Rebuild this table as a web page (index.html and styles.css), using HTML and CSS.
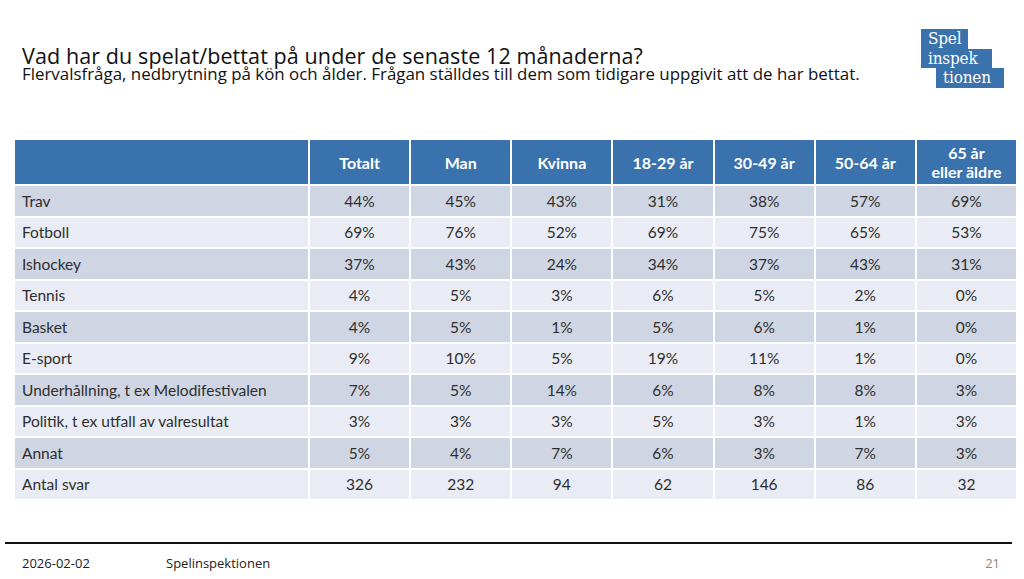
FILE: index.html
```html
<!DOCTYPE html>
<html lang="sv">
<head>
<meta charset="utf-8">
<link rel="stylesheet" href="styles.css">
</head>
<body>
<div class="slide">
  <header class="top">
    <div class="titles">
      <h1 class="title">Vad har du spelat/bettat på under de senaste 12 månaderna?</h1>
      <p class="subtitle">Flervalsfråga, nedbrytning på kön och ålder. Frågan ställdes till dem som tidigare uppgivit att de har bettat.</p>
    </div>
    <div class="logo">
      <span class="lg lg1">Spel</span>
      <span class="lg lg2">inspek</span>
      <span class="lg lg3">tionen</span>
    </div>
  </header>

  <div class="table">
    <div class="th first"></div>
    <div class="th">Totalt</div>
    <div class="th">Man</div>
    <div class="th">Kvinna</div>
    <div class="th">18-29 år</div>
    <div class="th">30-49 år</div>
    <div class="th">50-64 år</div>
    <div class="th">65 år<br>eller äldre</div>

    <div class="td lbl odd">Trav</div><div class="td odd">44%</div><div class="td odd">45%</div><div class="td odd">43%</div><div class="td odd">31%</div><div class="td odd">38%</div><div class="td odd">57%</div><div class="td odd">69%</div>
    <div class="td lbl">Fotboll</div><div class="td">69%</div><div class="td">76%</div><div class="td">52%</div><div class="td">69%</div><div class="td">75%</div><div class="td">65%</div><div class="td">53%</div>
    <div class="td lbl odd">Ishockey</div><div class="td odd">37%</div><div class="td odd">43%</div><div class="td odd">24%</div><div class="td odd">34%</div><div class="td odd">37%</div><div class="td odd">43%</div><div class="td odd">31%</div>
    <div class="td lbl">Tennis</div><div class="td">4%</div><div class="td">5%</div><div class="td">3%</div><div class="td">6%</div><div class="td">5%</div><div class="td">2%</div><div class="td">0%</div>
    <div class="td lbl odd">Basket</div><div class="td odd">4%</div><div class="td odd">5%</div><div class="td odd">1%</div><div class="td odd">5%</div><div class="td odd">6%</div><div class="td odd">1%</div><div class="td odd">0%</div>
    <div class="td lbl">E-sport</div><div class="td">9%</div><div class="td">10%</div><div class="td">5%</div><div class="td">19%</div><div class="td">11%</div><div class="td">1%</div><div class="td">0%</div>
    <div class="td lbl odd">Underhållning, t ex Melodifestivalen</div><div class="td odd">7%</div><div class="td odd">5%</div><div class="td odd">14%</div><div class="td odd">6%</div><div class="td odd">8%</div><div class="td odd">8%</div><div class="td odd">3%</div>
    <div class="td lbl">Politik, t ex utfall av valresultat</div><div class="td">3%</div><div class="td">3%</div><div class="td">3%</div><div class="td">5%</div><div class="td">3%</div><div class="td">1%</div><div class="td">3%</div>
    <div class="td lbl odd">Annat</div><div class="td odd">5%</div><div class="td odd">4%</div><div class="td odd">7%</div><div class="td odd">6%</div><div class="td odd">3%</div><div class="td odd">7%</div><div class="td odd">3%</div>
    <div class="td lbl">Antal svar</div><div class="td">326</div><div class="td">232</div><div class="td">94</div><div class="td">62</div><div class="td">146</div><div class="td">86</div><div class="td">32</div>
  </div>

  <footer class="footer">
    <span class="date">2026-02-02</span>
    <span class="org">Spelinspektionen</span>
    <span class="page">21</span>
  </footer>
</div>
</body>
</html>
```

FILE: styles.css
```css
* { box-sizing: border-box; }
html, body { margin: 0; padding: 0; background: #fff; }
body { width: 1024px; height: 579px; overflow: hidden; }

.slide {
  width: 1024px;
  height: 579px;
  display: flex;
  flex-direction: column;
  font-family: "Open Sans", "Noto Sans", sans-serif;
  color: #1a1a1a;
}

.top {
  display: flex;
  justify-content: space-between;
  align-items: flex-start;
  height: 140px;
  padding: 29px 20px 0 22px;
}

.titles { padding-top: 16.5px; }

.title {
  margin: 0;
  font-weight: 400;
  font-size: 21.5px;
  line-height: 20px;
  letter-spacing: 0.1px;
  color: #111;
}

.subtitle {
  margin: 0;
  font-size: 16.9px;
  line-height: 16px;
  color: #111;
}

.logo {
  display: flex;
  flex-direction: column;
  align-items: flex-start;
  font-family: "DejaVu Serif Condensed", "DejaVu Serif", serif;
  font-stretch: condensed;
  color: #fff;
  font-size: 17px;
  line-height: 19px;
}

.lg {
  background: #3a72ae;
  padding: 0 0 0 7px;
  height: 19.7px;
  display: block;
  letter-spacing: -0.2px;
}
.lg1 { width: 47px; }
.lg2 { width: 71px; }
.lg3 { width: 68px; margin-left: 15px; }

.table {
  display: grid;
  grid-template-columns: 293px repeat(7, 1fr);
  grid-template-rows: 44px;
  grid-auto-rows: 29.5px;
  gap: 2px;
  width: 1001px;
  margin-left: 15px;
  font-family: "Lato", "Open Sans", sans-serif;
  font-size: 15.5px;
  color: #2e2e2e;
}

.th {
  background: #3a72ae;
  color: #fff;
  font-weight: 700;
  font-size: 16px;
  display: flex;
  align-items: center;
  justify-content: center;
  text-align: center;
  line-height: 19px;
}

.td {
  background: #e9ecf4;
  display: flex;
  align-items: center;
  justify-content: center;
}
.td.odd { background: #cfd5e3; }
.td.lbl { justify-content: flex-start; padding-left: 7px; }

.footer {
  margin: 43px 12px 0 5px;
  border-top: 2px solid #111;
  display: flex;
  align-items: center;
  height: 36px;
  padding: 3px 0 0 17px;
  font-size: 13px;
  color: #222;
}
.date { width: 144px; }
.org { flex: 1; }
.page { color: #888; margin-right: 12px; }
```
